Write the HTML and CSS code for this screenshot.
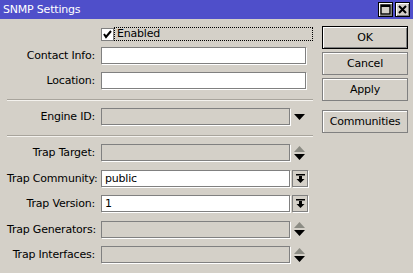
FILE: index.html
```html
<!DOCTYPE html>
<html>
<head>
	<meta charset="utf-8" />
	<title>SNMP Settings</title>
	<link rel="stylesheet" href="styles.css">
</head>
<body>
	<div class="window">
		<div class="titlebar">
			<span class="title">SNMP Settings</span>
			<div class="winBtns">
				<span class="winBtn"><svg width="11" height="11" viewBox="0 0 11 11"><rect x="1" y="1" width="9" height="9" fill="none" stroke="#000" stroke-width="1.4"/><rect x="1" y="1" width="9" height="2" fill="#000"/></svg></span>
				<span class="winBtn"><svg width="11" height="11" viewBox="0 0 11 11"><path d="M2 2 L9 9 M9 2 L2 9" stroke="#000" stroke-width="2"/></svg></span>
			</div>
		</div>

		<div class="content">
			<div class="form">
				<div class="row check">
					<span class="label"></span>
					<span class="checkbox"><svg width="9" height="9" viewBox="0 0 9 9"><path d="M1 4 L3 7 L8 1" fill="none" stroke="#000" stroke-width="2"/></svg></span>
					<span class="focus">Enabled</span>
				</div>
				<div class="row">
					<span class="label">Contact Info:</span>
					<span class="field"></span>
				</div>
				<div class="row">
					<span class="label">Location:</span>
					<span class="field"></span>
				</div>
				<div class="sep"></div>
				<div class="row">
					<span class="label">Engine ID:</span>
					<span class="field short off"></span>
					<span class="arrow"><svg width="11" height="6" viewBox="0 0 11 6"><path d="M0 0 H11 L5.5 6 Z" fill="#000"/></svg></span>
				</div>
				<div class="sep"></div>
				<div class="traps">
					<div class="row">
						<span class="label">Trap Target:</span>
						<span class="field short off"></span>
						<span class="arrow"><svg width="11" height="14" viewBox="0 0 11 14"><path d="M5.5 0 L11 6 H0 Z" fill="#8c8c84"/><path d="M0 8 H11 L5.5 14 Z" fill="#000"/></svg></span>
					</div>
					<div class="row">
						<span class="label">Trap Community:</span>
						<span class="field short">public</span>
						<span class="drop"><svg width="9" height="9" viewBox="0 0 9 9"><rect x="0" y="0" width="9" height="1.5" fill="#000"/><path d="M3 2 H6 V5 H8.5 L4.5 9 L0.5 5 H3 Z" fill="#000"/></svg></span>
					</div>
					<div class="row">
						<span class="label">Trap Version:</span>
						<span class="field short">1</span>
						<span class="drop"><svg width="9" height="9" viewBox="0 0 9 9"><rect x="0" y="0" width="9" height="1.5" fill="#000"/><path d="M3 2 H6 V5 H8.5 L4.5 9 L0.5 5 H3 Z" fill="#000"/></svg></span>
					</div>
					<div class="row">
						<span class="label">Trap Generators:</span>
						<span class="field short off"></span>
						<span class="arrow"><svg width="11" height="14" viewBox="0 0 11 14"><path d="M5.5 0 L11 6 H0 Z" fill="#8c8c84"/><path d="M0 8 H11 L5.5 14 Z" fill="#000"/></svg></span>
					</div>
					<div class="row">
						<span class="label">Trap Interfaces:</span>
						<span class="field short off"></span>
						<span class="arrow"><svg width="11" height="14" viewBox="0 0 11 14"><path d="M5.5 0 L11 6 H0 Z" fill="#8c8c84"/><path d="M0 8 H11 L5.5 14 Z" fill="#000"/></svg></span>
					</div>
				</div>
			</div>

			<div class="buttons">
				<span class="btn default">OK</span>
				<span class="btn">Cancel</span>
				<span class="btn">Apply</span>
				<span class="btn gap">Communities</span>
			</div>
		</div>
	</div>
</body>
</html>
```

FILE: styles.css
```css
body {
	margin: 0;
	font-family: "DejaVu Sans", "Liberation Sans", sans-serif;
	font-size: 11px;
	letter-spacing: -0.2px;
	color: #000;
	background: #d4d0c8;
}

.window {
	width: 413px;
	height: 273px;
	background: #d4d0c8;
}

.titlebar {
	height: 19px;
	background: #4f4fca;
	display: flex;
	align-items: center;
	justify-content: space-between;
	padding: 0 3px 0 3px;
}

.title {
	color: #fff;
	font-size: 11px;
}

.winBtns {
	display: flex;
	gap: 2px;
}

.winBtn {
	width: 13px;
	height: 13px;
	background: #d4d0c8;
	border: 1px solid #000;
	box-shadow: inset 1px 1px 0 #fff, inset -1px -1px 0 #808080;
	display: flex;
	align-items: center;
	justify-content: center;
}

.content {
	display: flex;
	padding-top: 7px;
}

.form {
	width: 306px;
	padding-left: 7px;
	padding-top: 1px;
}

.row {
	display: flex;
	align-items: center;
	height: 17px;
	margin-bottom: 8px;
}

.row.check {
	height: 14px;
	margin-bottom: 6px;
}

.traps .row {
	margin-bottom: 8.5px;
}

.label {
	width: 88px;
	text-align: right;
	padding-right: 6px;
	white-space: nowrap;
}

.checkbox {
	width: 11px;
	height: 11px;
	border: 1px solid #808080;
	background: #fff;
	display: flex;
	align-items: center;
	justify-content: center;
}

.focus {
	flex: 1;
	height: 12px;
	line-height: 12px;
	border: 1px dotted #000;
	padding-left: 2px;
}

.field {
	height: 15px;
	border: 1px solid #808080;
	box-shadow: 1px 1px 0 #fff;
	background: #fff;
	line-height: 15px;
	padding-left: 3px;
	width: 200px;
}

.field.short {
	width: 184px;
}

.field.off {
	background: #d4d0c8;
}

.arrow {
	width: 17px;
	display: flex;
	justify-content: center;
	margin-left: 1px;
}

.drop {
	width: 14px;
	height: 15px;
	margin-left: 2px;
	border: 1px solid #808080;
	box-shadow: 1px 1px 0 #fff;
	display: flex;
	align-items: center;
	justify-content: center;
}

/* margin-top collapses with the row above, so it sets the full gap */
.sep {
	height: 1px;
	background: #a8a49c;
	border-bottom: 1px solid #f4f2ee;
	margin: 10px 0 7px 0;
}

.buttons {
	margin-left: 9px;
	display: flex;
	flex-direction: column;
}

.btn {
	width: 84px;
	height: 21px;
	line-height: 21px;
	text-align: center;
	border: 1px solid #808080;
	box-shadow: inset 1px 1px 0 #fff;
	margin-bottom: 3px;
}

.btn.default {
	border-color: #000;
	box-shadow: inset 1px 1px 0 #fff, inset -1px -1px 0 #808080;
}

.btn.gap {
	margin-top: 6px;
}
```
